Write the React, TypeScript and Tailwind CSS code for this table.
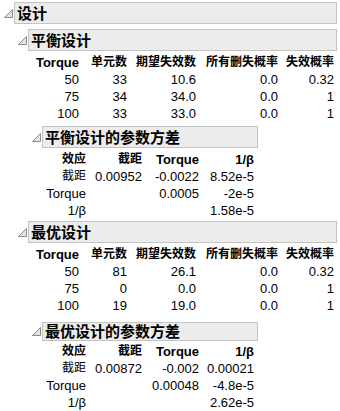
import React from 'react';

const FONT = { fontFamily: '"Liberation Sans", "Noto Sans CJK SC", sans-serif' };

function Tri() {
  return (
    <svg width="9" height="9" viewBox="0 0 9 9" className="shrink-0">
      <path d="M0.5 8.5 L8.5 0.5 L8.5 8.5 Z" fill="#e4e4e4" stroke="#8a8a8a" strokeWidth="1" />
    </svg>
  );
}

function Outline({ title, indent, right, h = 'h-[22px]', mt }: { title: string; indent: string; right: string; h?: string; mt: string }) {
  return (
    <div className={`flex items-center gap-[1px] ${indent} ${right} ${mt}`}>
      <Tri />
      <div className={`flex-1 ${h} flex items-center border border-[#c4c4c4] bg-[#ececec] pl-[2px] text-[15px] font-bold leading-none text-black`}>
        {title}
      </div>
    </div>
  );
}

const designCols = ['w-[44px]', 'w-[48px]', 'w-[69px]', 'w-[82px]', 'w-[56px]'];
const designHead = ['Torque', '单元数', '期望失效数', '所有删失概率', '失效概率'];

function DesignTable({ rows }: { rows: string[][] }) {
  return (
    <div className="mt-[3px] pl-[35px] text-[13px] leading-[17px] text-black">
      <div className="flex font-bold">
        {designHead.map((h, i) => (
          <div key={h} className={`${designCols[i]} shrink-0 text-right ${i === 0 ? 'text-[13px]' : 'text-[12px]'}`}>{h}</div>
        ))}
      </div>
      {rows.map((r, ri) => (
        <div key={ri} className="flex">
          {r.map((c, i) => (
            <div key={i} className={`${designCols[i]} shrink-0 text-right`}>{c}</div>
          ))}
        </div>
      ))}
    </div>
  );
}

const varCols = ['w-[44px]', 'w-[56px]', 'w-[57px]', 'w-[55px]'];

function VarTable({ rows, mt }: { rows: string[][]; mt: string }) {
  const head = ['效应', '截距', 'Torque', '1/β'];
  return (
    <div className={`${mt} pl-[42px] text-[13px] leading-[17px] text-black`}>
      <div className="flex font-bold">
        {head.map((h, i) => (
          <div key={h} className={`${varCols[i]} shrink-0 text-right ${i < 2 ? 'text-[12px]' : 'text-[13px]'}`}>{h}</div>
        ))}
      </div>
      {rows.map((r, ri) => (
        <div key={ri} className="flex">
          {r.map((c, i) => (
            <div key={i} className={`${varCols[i]} shrink-0 text-right ${i === 0 && c === '截距' ? 'text-[12px]' : ''}`}>{c}</div>
          ))}
        </div>
      ))}
    </div>
  );
}

export default function App() {
  return (
    <div className="w-[340px] h-[411px] overflow-hidden bg-white pt-[2px]" style={FONT}>
      <Outline title="设计" indent="pl-[4px]" right="pr-[3px]" mt="mt-0" />
      <Outline title="平衡设计" indent="pl-[18px]" right="pr-[3px]" mt="mt-[5px]" />
      <DesignTable
        rows={[
          ['50', '33', '10.6', '0.0', '0.32'],
          ['75', '34', '34.0', '0.0', '1'],
          ['100', '33', '33.0', '0.0', '1'],
        ]}
      />
      <Outline title="平衡设计的参数方差" indent="pl-[32px]" right="pr-[82px]" mt="mt-[4px]" />
      <VarTable
        mt="mt-[3px]"
        rows={[
          ['截距', '0.00952', '-0.0022', '8.52e-5'],
          ['Torque', '', '0.0005', '-2e-5'],
          ['1/β', '', '', '1.58e-5'],
        ]}
      />
      <Outline title="最优设计" indent="pl-[18px]" right="pr-[3px]" mt="mt-[2px]" />
      <DesignTable
        rows={[
          ['50', '81', '26.1', '0.0', '0.32'],
          ['75', '0', '0.0', '0.0', '1'],
          ['100', '19', '19.0', '0.0', '1'],
        ]}
      />
      <Outline title="最优设计的参数方差" indent="pl-[32px]" right="pr-[82px]" h="h-[19px]" mt="mt-[8px]" />
      <VarTable
        mt="mt-[2px]"
        rows={[
          ['截距', '0.00872', '-0.002', '0.00021'],
          ['Torque', '', '0.00048', '-4.8e-5'],
          ['1/β', '', '', '2.62e-5'],
        ]}
      />
    </div>
  );
}
